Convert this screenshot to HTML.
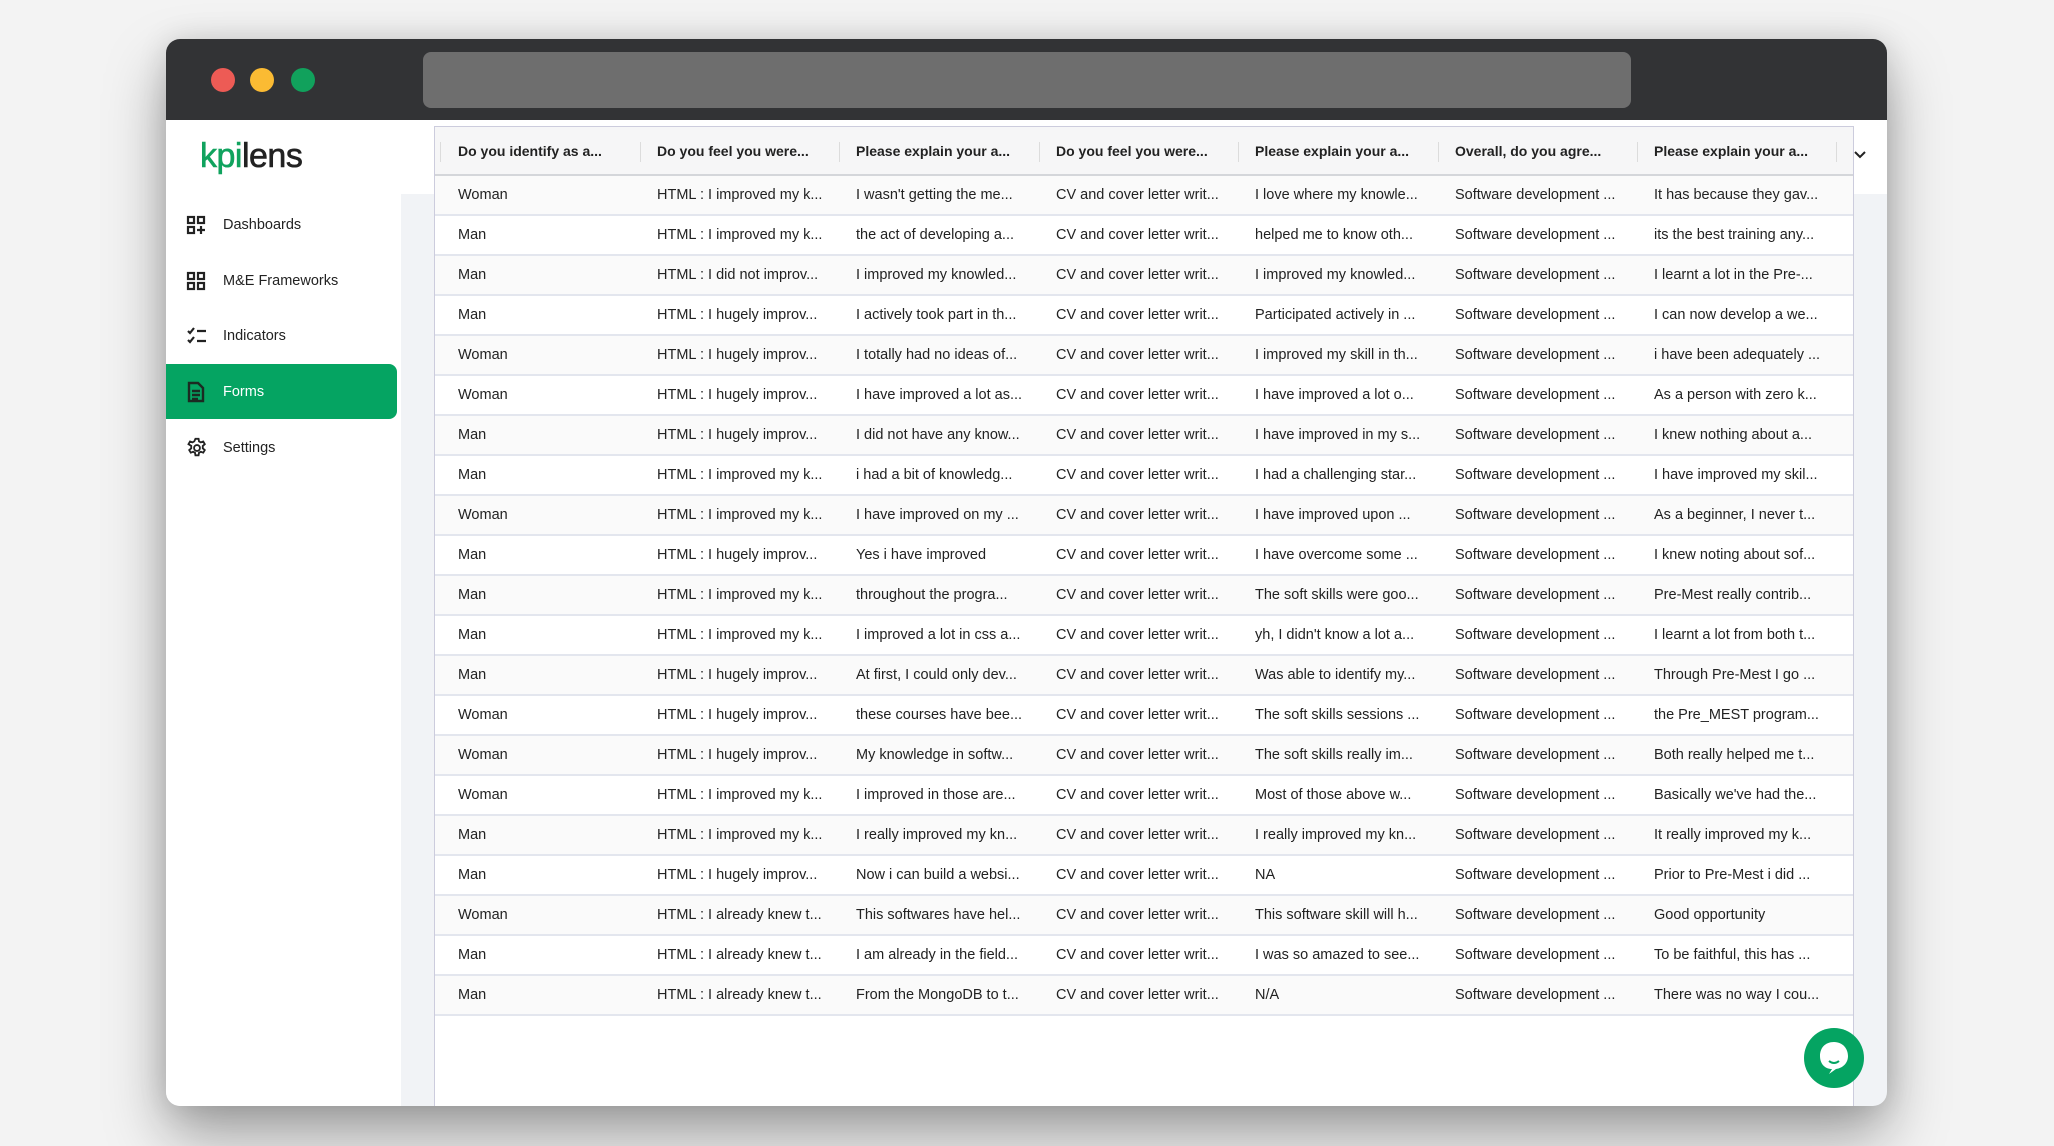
<!DOCTYPE html>
<html><head><meta charset="utf-8"><style>
*{box-sizing:border-box;margin:0;padding:0}
html,body{width:2054px;height:1146px;overflow:hidden}
body{background:#f3f3f3;font-family:"Liberation Sans",Arial,sans-serif;position:relative}
.win{position:absolute;left:166px;top:39px;width:1721px;height:1067px;border-radius:14px;overflow:hidden;background:#f1f3f6;box-shadow:0 30px 60px rgba(0,0,0,.35),0 0 30px rgba(0,0,0,.12)}
.title{position:absolute;left:0;top:0;right:0;height:81px;background:#323335}
.dot{position:absolute;top:29px;width:24px;height:24px;border-radius:50%}
.addr{position:absolute;left:257px;top:13px;width:1208px;height:56px;background:#6e6e6e;border-radius:8px}
.side{position:absolute;left:0;top:81px;width:235px;bottom:0;background:#fff}
.whitestrip{position:absolute;left:235px;top:81px;right:0;height:74px;background:#fff}
.logo{position:absolute;left:34px;top:17px;font-size:34px;letter-spacing:-0.5px;color:#222;-webkit-text-stroke:0.6px #222}
.logo b{font-weight:normal;color:#10a35e;-webkit-text-stroke:0.6px #10a35e}
.nav{position:absolute;left:0;width:231px;height:55px;display:flex;align-items:center;font-size:14.5px;color:#222}
.nav svg{position:absolute;left:20px}
.nav span{position:absolute;left:57px}
.nav.act{background:#05a462;color:#fff;border-radius:0 8px 8px 0}
.tbl{position:absolute;left:268px;top:87px;width:1420px;bottom:0;background:#fff;border:1px solid #ccd;border-bottom:none}
.row{position:absolute;left:0;width:1418px;height:40px;border-bottom:2px solid #e3e6ee;font-size:14.5px;color:#222}
.row:nth-child(even){background:#fafafa}
.hd{position:absolute;left:0;top:0;width:1418px;height:49px;background:#f6f6f7;border-bottom:2px solid #d4d6da;font-weight:bold;font-size:14px;color:#222}
.c{position:absolute;top:0;height:100%;display:flex;align-items:center;white-space:nowrap}
.hd .sep{position:absolute;top:15px;width:1px;height:20px;background:#dcdcdc}
</style></head><body>
<div class="win">
<div class="title">
<div class="dot" style="left:45px;background:#ed5b55"></div>
<div class="dot" style="left:84px;background:#fbbb33"></div>
<div class="dot" style="left:125px;background:#11a15c"></div>
<div class="addr"></div>
</div>
<div class="whitestrip"></div>
<div class="side">
<div class="logo"><b>kpi</b>lens</div>
<div class="nav" style="top:77px"><svg width="20" height="20" viewBox="0 0 20 20" fill="none" stroke="#222" stroke-width="2.2"><rect x="2" y="2" width="6" height="6"/><rect x="12" y="2" width="6" height="6"/><rect x="2" y="12" width="6" height="6"/><path d="M15 11v8M11 15h8"/></svg><span>Dashboards</span></div>
<div class="nav" style="top:133px"><svg width="20" height="20" viewBox="0 0 20 20" fill="none" stroke="#222" stroke-width="2.2"><rect x="2" y="2" width="6" height="6"/><rect x="12" y="2" width="6" height="6"/><rect x="2" y="12" width="6" height="6"/><rect x="12" y="12" width="6" height="6"/></svg><span>M&amp;E Frameworks</span></div>
<div class="nav" style="top:188px"><svg width="22" height="20" viewBox="0 0 22 20" fill="none" stroke="#222" stroke-width="2.2"><path d="M2 5l2 2 4-5M2 14l2 2 4-5M11 5h9M11 15h9"/></svg><span>Indicators</span></div>
<div class="nav act" style="top:244px"><svg width="20" height="22" viewBox="0 0 20 22" fill="none" stroke="#1c2a22" stroke-width="2.4"><path d="M3 2h9l5 5v13H3z"/><path d="M6 10h8M6 14h8M6 18h6"/></svg><span>Forms</span></div>
<div class="nav" style="top:300px"><svg width="22" height="22" viewBox="0 0 24 24" fill="none" stroke="#222" stroke-width="2"><circle cx="12" cy="12" r="3.2"/><path d="M10.3 2h3.4l.5 2.8 2 1.1 2.6-1 1.7 2.9-2.2 1.9v2.6l2.2 1.9-1.7 2.9-2.6-1-2 1.1-.5 2.8h-3.4l-.5-2.8-2-1.1-2.6 1-1.7-2.9 2.2-1.9V9.7L2.7 7.8l1.7-2.9 2.6 1 2-1.1z"/></svg><span>Settings</span></div>
</div>
<div class="tbl">
<div class="hd">
<div class="c" style="left:23px">Do you identify as a...</div>
<div class="c" style="left:222px">Do you feel you were...</div>
<div class="c" style="left:421px">Please explain your a...</div>
<div class="c" style="left:621px">Do you feel you were...</div>
<div class="c" style="left:820px">Please explain your a...</div>
<div class="c" style="left:1020px">Overall, do you agre...</div>
<div class="c" style="left:1219px">Please explain your a...</div>
<div class="sep" style="left:5px"></div><div class="sep" style="left:205px"></div><div class="sep" style="left:404px"></div><div class="sep" style="left:604px"></div><div class="sep" style="left:803px"></div><div class="sep" style="left:1003px"></div><div class="sep" style="left:1202px"></div><div class="sep" style="left:1401px"></div>
</div>
<div id="rows"></div>
</div>
<svg style="position:absolute;left:1687px;top:110px" width="14" height="12" viewBox="0 0 14 12"><path d="M2 3l5 5 5-5" fill="none" stroke="#222" stroke-width="2"/></svg>
<svg style="position:absolute;left:1637px;top:988px" width="62" height="62" viewBox="0 0 62 62"><circle cx="31" cy="31" r="30" fill="#05a462"/><path d="M31 15c-9 0-14 6-14 14s5 13 12 13l-3 5 7-5c7-1 12-6 12-13s-5-14-14-14z" fill="#fff"/><path d="M26 34q5 4 10 0" fill="none" stroke="#05a462" stroke-width="2"/></svg>
</div>
<script>
var d=[
["Woman","HTML : I improved my k...","I wasn't getting the me...","I love where my knowle...","It has because they gav..."],
["Man","HTML : I improved my k...","the act of developing a...","helped me to know oth...","its the best training any..."],
["Man","HTML : I did not improv...","I improved my knowled...","I improved my knowled...","I learnt a lot in the Pre-..."],
["Man","HTML : I hugely improv...","I actively took part in th...","Participated actively in ...","I can now develop a we..."],
["Woman","HTML : I hugely improv...","I totally had no ideas of...","I improved my skill in th...","i have been adequately ..."],
["Woman","HTML : I hugely improv...","I have improved a lot as...","I have improved a lot o...","As a person with zero k..."],
["Man","HTML : I hugely improv...","I did not have any know...","I have improved in my s...","I knew nothing about a..."],
["Man","HTML : I improved my k...","i had a bit of knowledg...","I had a challenging star...","I have improved my skil..."],
["Woman","HTML : I improved my k...","I have improved on my ...","I have improved upon ...","As a beginner, I never t..."],
["Man","HTML : I hugely improv...","Yes i have improved","I have overcome some ...","I knew noting about sof..."],
["Man","HTML : I improved my k...","throughout the progra...","The soft skills were goo...","Pre-Mest really contrib..."],
["Man","HTML : I improved my k...","I improved a lot in css a...","yh, I didn't know a lot a...","I learnt a lot from both t..."],
["Man","HTML : I hugely improv...","At first, I could only dev...","Was able to identify my...","Through Pre-Mest I go ..."],
["Woman","HTML : I hugely improv...","these courses have bee...","The soft skills sessions ...","the Pre_MEST program..."],
["Woman","HTML : I hugely improv...","My knowledge in softw...","The soft skills really im...","Both really helped me t..."],
["Woman","HTML : I improved my k...","I improved in those are...","Most of those above w...","Basically we've had the..."],
["Man","HTML : I improved my k...","I really improved my kn...","I really improved my kn...","It really improved my k..."],
["Man","HTML : I hugely improv...","Now i can build a websi...","NA","Prior to Pre-Mest i did ..."],
["Woman","HTML : I already knew t...","This softwares have hel...","This software skill will h...","Good opportunity"],
["Man","HTML : I already knew t...","I am already in the field...","I was so amazed to see...","To be faithful, this has ..."],
["Man","HTML : I already knew t...","From the MongoDB to t...","N/A","There was no way I cou..."]];
var h="",L=[23,222,421,621,820,1020,1219];
d.forEach(function(r,i){var v=[r[0],r[1],r[2],"CV and cover letter writ...",r[3],"Software development ...",r[4]];
h+='<div class="row" style="top:'+(49+i*40)+'px">';v.forEach(function(t,j){h+='<div class="c" style="left:'+L[j]+'px">'+t.replace(/&/g,"&amp;")+'</div>'});h+='</div>'});
document.getElementById("rows").outerHTML=h;
</script>
</body></html>
